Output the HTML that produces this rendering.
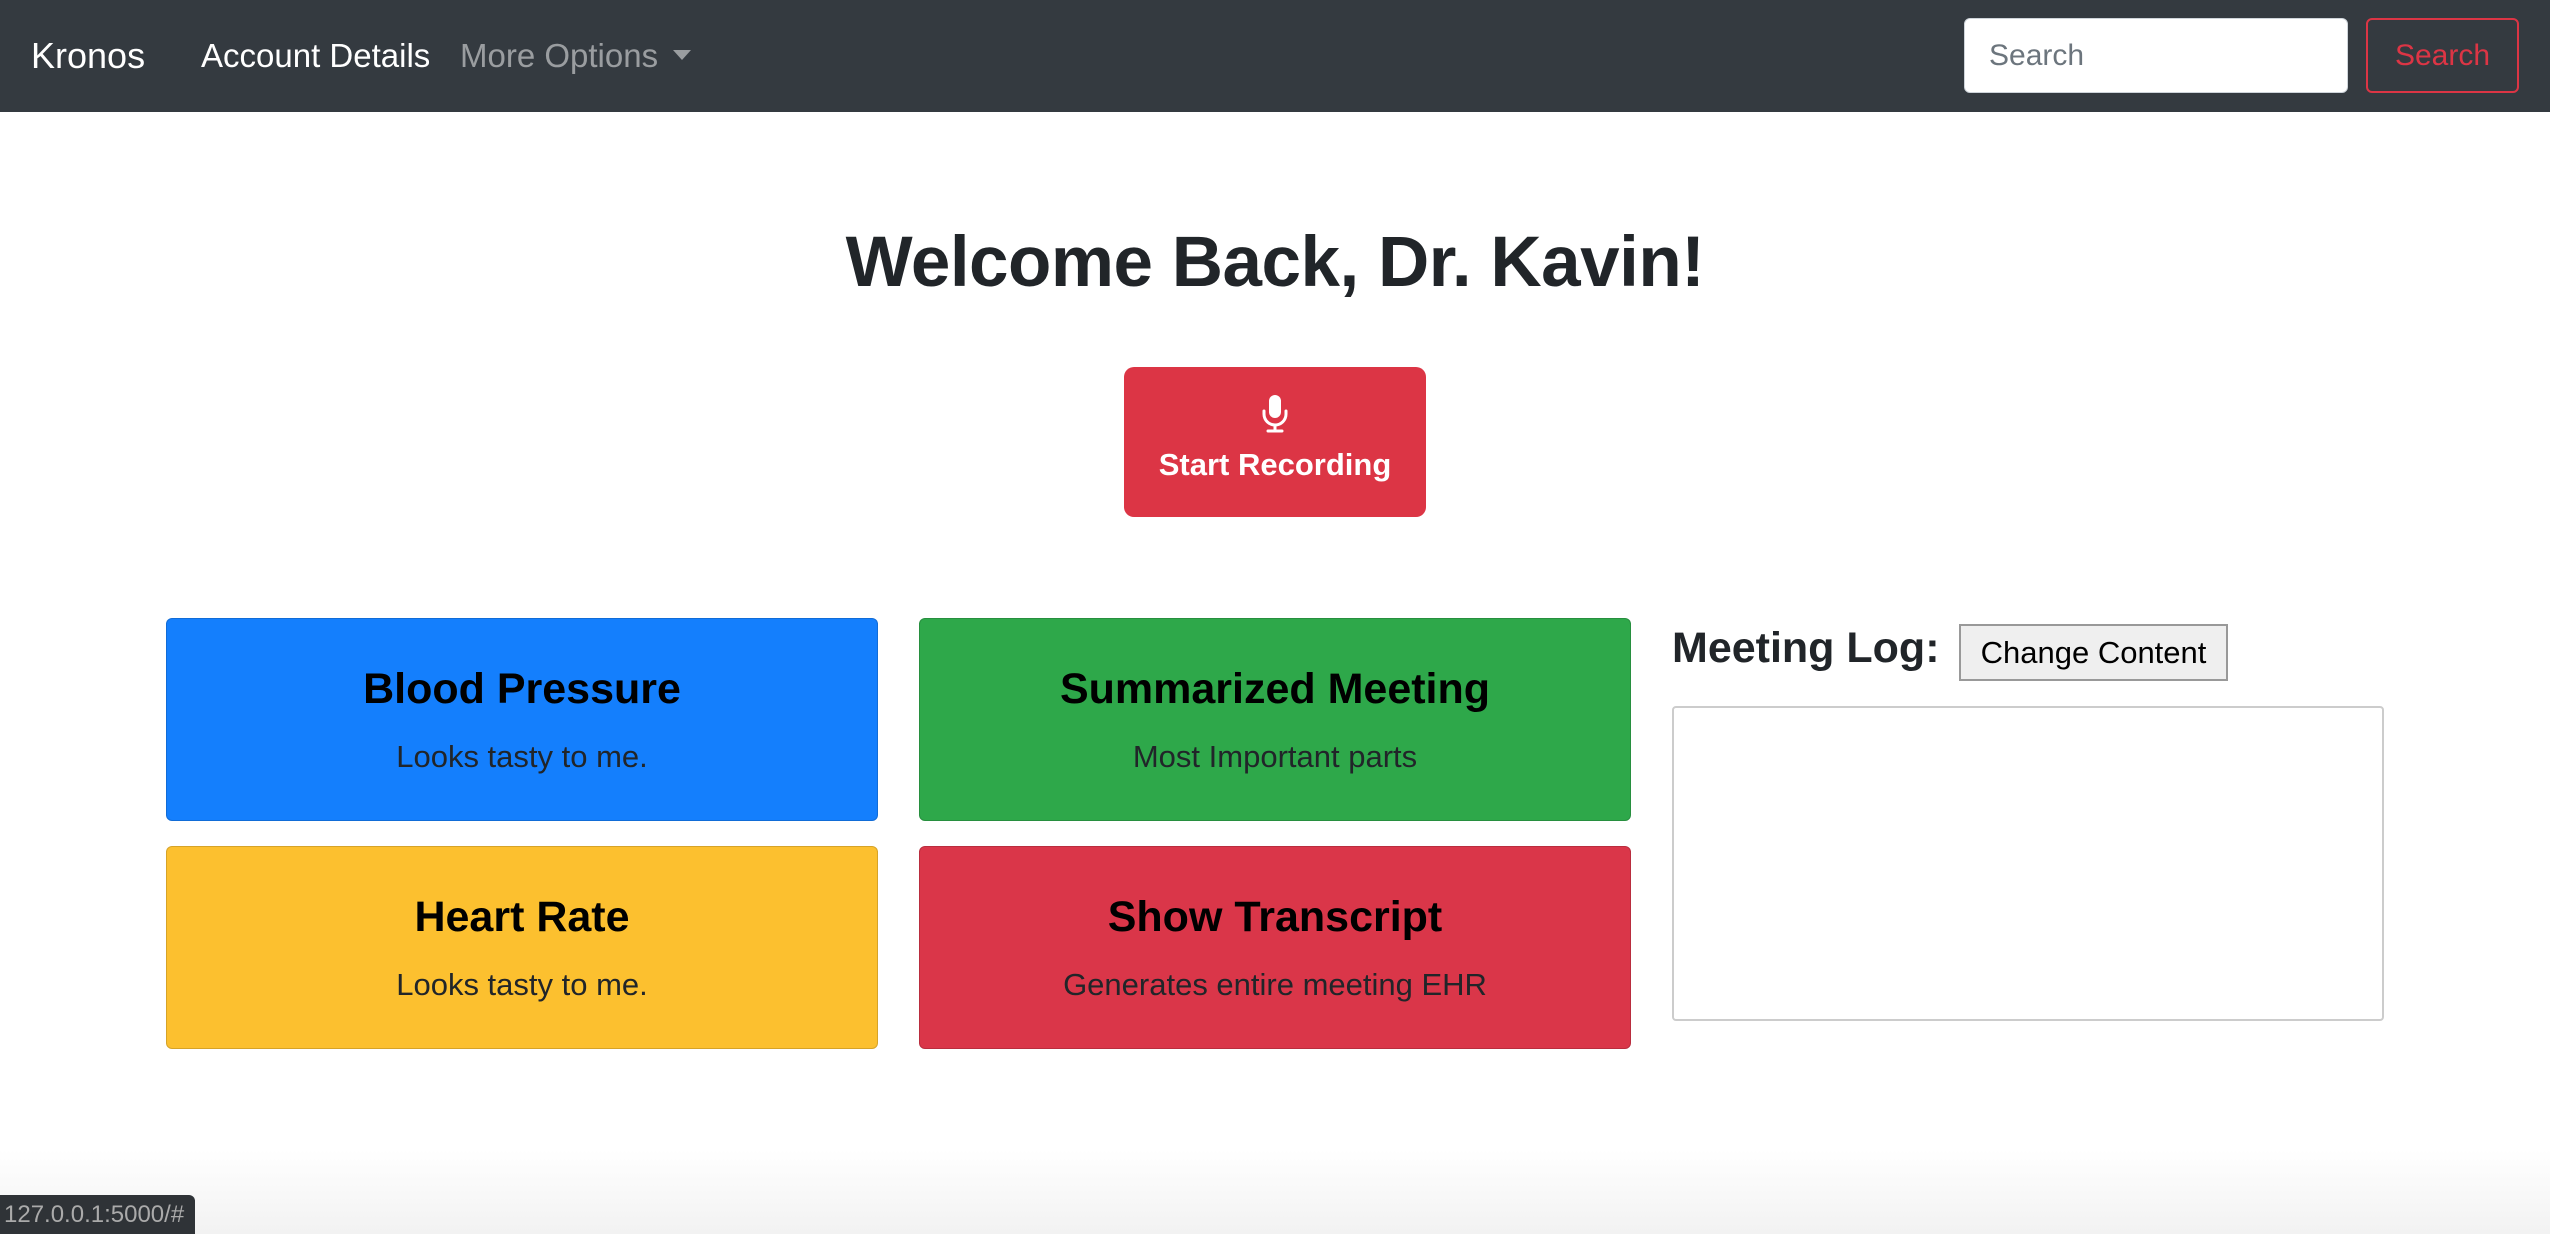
<!DOCTYPE html>
<html><head><meta charset="utf-8"><style>
*{box-sizing:border-box;margin:0;padding:0}
body{width:2550px;height:1234px;overflow:hidden;background:#fff;font-family:"Liberation Sans",Arial,sans-serif;color:#212529;position:relative}
.nav{position:absolute;left:0;top:0;width:2550px;height:112px;background:#343a40}
.nav span{position:absolute;top:0;line-height:112px;font-size:33px}
.inp{position:absolute;left:1964px;top:18px;width:384px;height:75px;background:#fff;border-radius:6px;border:1px solid #ced4da;font-size:30px;color:#6c757d;line-height:73px;padding-left:24px}
.sbtn{position:absolute;left:2366px;top:18px;width:153px;height:75px;border:2px solid #dc3545;border-radius:6px;color:#dc3545;font-size:30px;line-height:71px;text-align:center}
h1{position:absolute;left:0;width:2550px;top:215px;text-align:center;font-size:71px;font-weight:bold;line-height:96px;letter-spacing:-0.5px}
.rec{position:absolute;left:1124px;top:367px;width:302px;height:150px;background:#dc3545;border-radius:10px;color:#fff;text-align:center;font-weight:bold;font-size:31px}
.card{position:absolute;width:712px;height:203px;border-radius:6px;text-align:center;border:1px solid rgba(0,0,0,.15)}
.card b{display:block;font-size:43px;font-weight:bold;margin-top:44px;line-height:52px;color:#000}
.card p{font-size:31px;margin-top:24px;color:#212529}
</style></head><body>
<div class="nav">
<span style="left:31px;color:#fff;font-size:36px">Kronos</span>
<span style="left:201px;color:#fff">Account Details</span>
<span style="left:460px;color:rgba(255,255,255,.5)">More Options</span>
<div style="position:absolute;left:673px;top:50px;width:0;height:0;border-left:9px solid transparent;border-right:9px solid transparent;border-top:10px solid rgba(255,255,255,.5)"></div>
<div class="inp">Search</div>
<div class="sbtn">Search</div>
</div>
<h1>Welcome Back, Dr. Kavin!</h1>
<div class="rec">
<svg width="30" height="40" viewBox="0 0 30 40" style="position:absolute;left:136px;top:27px"><rect x="9" y="1" width="12" height="23" rx="6" fill="#fff"/><path d="M4 17v3a11 11 0 0 0 22 0v-3" fill="none" stroke="#fff" stroke-width="3" stroke-linecap="round"/><path d="M15 31v6M8 37h14" stroke="#fff" stroke-width="3" stroke-linecap="round"/></svg>
<div style="position:absolute;left:0;width:302px;top:78px;line-height:40px">Start Recording</div>
</div>
<div class="card" style="left:166px;top:618px;background:#147ffd"><b>Blood Pressure</b><p>Looks tasty to me.</p></div>
<div class="card" style="left:919px;top:618px;background:#2ea84a"><b>Summarized Meeting</b><p>Most Important parts</p></div>
<div class="card" style="left:166px;top:846px;background:#fcc02f"><b>Heart Rate</b><p>Looks tasty to me.</p></div>
<div class="card" style="left:919px;top:846px;background:#da3649"><b>Show Transcript</b><p>Generates entire meeting EHR</p></div>
<div style="position:absolute;left:1672px;top:620px;font-size:43px;line-height:56px;font-weight:bold">Meeting Log:</div>
<div style="position:absolute;left:1959px;top:624px;width:269px;height:57px;background:#efefef;border:2px solid #999;font-size:31px;line-height:53px;text-align:center;color:#000">Change Content</div>
<div style="position:absolute;left:1672px;top:706px;width:712px;height:315px;border:2px solid #ccc;border-radius:4px"></div>
<div style="position:absolute;left:0;top:1150px;width:2550px;height:84px;background:linear-gradient(#fff,#f2f2f2)"></div>
<div style="position:absolute;left:0;top:1195px;width:195px;height:39px;background:#2f3337;border-top-right-radius:6px;color:#aaa;font-size:24px;line-height:39px;padding-left:4px">127.0.0.1:5000/#</div>
</body></html>
